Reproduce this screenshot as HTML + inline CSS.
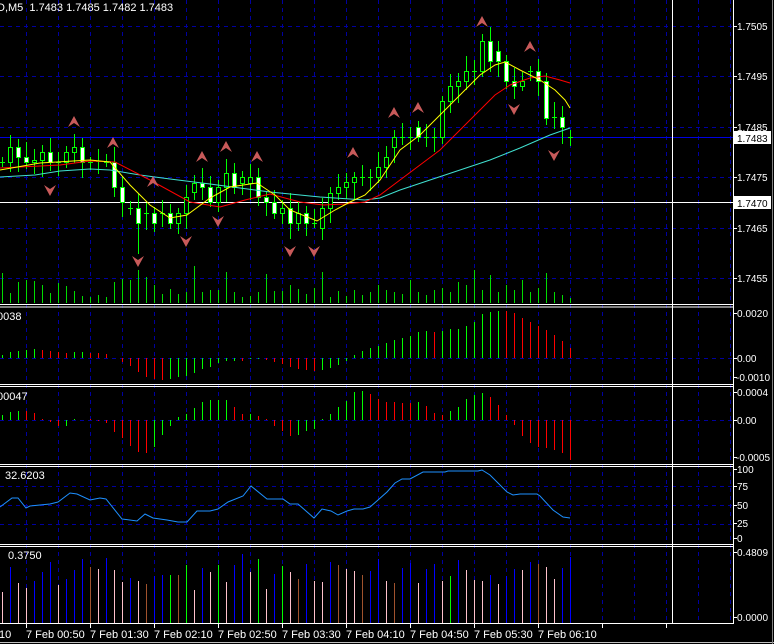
<!DOCTYPE html>
<html><head><meta charset="utf-8">
<style>
html,body{margin:0;padding:0;background:#000;}
body{width:774px;height:644px;overflow:hidden;position:relative;font-family:"Liberation Sans",sans-serif;}
svg{position:absolute;left:0;top:0;}
text{font-family:"Liberation Sans",sans-serif;font-size:11px;fill:#fff;}
text.r{font-size:10px;}
</style></head>
<body>
<svg id="s" width="774" height="644" viewBox="0 0 774 644" xmlns="http://www.w3.org/2000/svg" shape-rendering="crispEdges">
<rect x="0" y="0" width="774" height="644" fill="#000"/>
<g id="grid"></g>
<g id="main"></g>
<g id="ind"></g>
<line x1="672.5" y1="0" x2="672.5" y2="624" stroke="#fff"/>
<line x1="733.5" y1="0" x2="733.5" y2="624" stroke="#fff"/>
<line x1="0" y1="304.5" x2="734" y2="304.5" stroke="#fff"/>
<line x1="0" y1="307" x2="734" y2="307" stroke="#fff"/>
<line x1="0" y1="384.5" x2="734" y2="384.5" stroke="#fff"/>
<line x1="0" y1="386.5" x2="734" y2="386.5" stroke="#fff"/>
<line x1="0" y1="464.5" x2="734" y2="464.5" stroke="#fff"/>
<line x1="0" y1="466.5" x2="734" y2="466.5" stroke="#fff"/>
<line x1="0" y1="544.5" x2="734" y2="544.5" stroke="#fff"/>
<line x1="0" y1="546.5" x2="734" y2="546.5" stroke="#fff"/>
<line x1="0" y1="623.5" x2="734" y2="623.5" stroke="#fff"/>
<line x1="0" y1="642.5" x2="774" y2="642.5" stroke="#c0c0c0"/>
<line x1="772.5" y1="0" x2="772.5" y2="644" stroke="#808080"/>
<g id="ticks"></g>
<text x="-3" y="11">D,M5&#160;&#160;1.7483 1.7485 1.7482 1.7483</text>
<text x="-3" y="320">0038</text>
<text x="-3" y="400">00047</text>
<text x="5" y="479">32.6203</text>
<text x="8" y="559">0.3750</text>
<text class="r" x="737" y="30">1.7505</text>
<text class="r" x="737" y="80">1.7495</text>
<text class="r" x="737" y="131">1.7485</text>
<text class="r" x="737" y="181">1.7475</text>
<text class="r" x="737" y="232">1.7465</text>
<text class="r" x="737" y="282">1.7455</text>
<rect x="734" y="131" width="37" height="13" fill="#fff"/>
<text class="r" x="737" y="142" style="fill:#000">1.7483</text>
<rect x="734" y="196" width="37" height="13" fill="#fff"/>
<text class="r" x="737" y="207" style="fill:#000">1.7470</text>
<text class="r" x="737" y="317" textLength="31">0.0020</text>
<text class="r" x="737" y="362">0.00</text>
<text class="r" x="736" y="381" textLength="34">-0.0010</text>
<text class="r" x="737" y="396" textLength="31">0.0004</text>
<text class="r" x="737" y="424">0.00</text>
<text class="r" x="736" y="461" textLength="34">-0.0005</text>
<text class="r" x="737" y="473">100</text>
<text class="r" x="737" y="490">75</text>
<text class="r" x="737" y="509">50</text>
<text class="r" x="737" y="527">25</text>
<text class="r" x="737" y="542">0</text>
<text class="r" x="737" y="556" textLength="31">0.4809</text>
<text class="r" x="737" y="621" textLength="31">0.0000</text>
<text x="-1" y="638">10</text>
<text x="26" y="638">7 Feb 00:50</text>
<text x="90" y="638">7 Feb 01:30</text>
<text x="154" y="638">7 Feb 02:10</text>
<text x="218" y="638">7 Feb 02:50</text>
<text x="282" y="638">7 Feb 03:30</text>
<text x="346" y="638">7 Feb 04:10</text>
<text x="410" y="638">7 Feb 04:50</text>
<text x="474" y="638">7 Feb 05:30</text>
<text x="538" y="638">7 Feb 06:10</text>
</svg>
<script>
(function(){
var NS="http://www.w3.org/2000/svg";
function el(g,t,a){var e=document.createElementNS(NS,t);for(var k in a)e.setAttribute(k,a[k]);g.appendChild(e);return e;}
var grid=document.getElementById('grid'),main=document.getElementById('main'),ind=document.getElementById('ind'),ticks=document.getElementById('ticks');
var gc="#0000a0";
for(var x=26;x<733;x+=32){el(grid,'line',{x1:x+.5,y1:0,x2:x+.5,y2:623,stroke:gc,'stroke-dasharray':'4,4'});}
[26,76,127,177,228,278,358,420,486,505,524].forEach(function(y){el(grid,'line',{x1:0,y1:y+.5,x2:733,y2:y+.5,stroke:gc,'stroke-dasharray':'4,4'});});
[26,76,127,177,228,278,313,358,377,392,420,457,469,486,505,523,538,552,617].forEach(function(y){el(ticks,'line',{x1:733,y1:y+.5,x2:737,y2:y+.5,stroke:'#fff'});});
for(var t=26;t<700;t+=64){el(ticks,'line',{x1:t+.5,y1:624,x2:t+.5,y2:628,stroke:'#fff'});}
el(main,'line',{x1:0,y1:137.5,x2:733,y2:137.5,stroke:'#0000e0'});
el(main,'line',{x1:0,y1:202.5,x2:733,y2:202.5,stroke:'#fff'});
var vol=[273,293,282,280,281,285,293,283,286,291,296,297,295,297,282,279,280,270,277,285,294,289,294,292,266,292,290,290,272,292,297,296,292,274,291,291,285,289,294,288,272,297,291,296,290,295,292,285,290,292,294,280,292,295,290,288,292,282,285,270,290,275,292,285,290,280,292,288,273,292,295,298];
for(var i=0;i<72;i++){var X=2+8*i+.5;el(main,'line',{x1:X,y1:vol[i],x2:X,y2:303,stroke:'#00dd00'});}
var c=[162,147,157,162,160,152,162,162,152,147,162,162,161,162,187,202,208,223,213,223,213,223,213,197,183,187,202,187,173,187,177,177,197,202,213,208,223,213,223,223,208,193,187,182,177,177,177,167,157,137,137,137,137,137,137,101,86,81,71,71,41,61,61,81,86,81,71,81,118,117,127,137];
var o=[];for(i=0;i<72;i++)o[i]=i?c[i-1]:162;
o[18]=213;o[20]=213;o[22]=223;o[24]=192;o[26]=187;o[30]=183;o[31]=183;o[35]=213;o[37]=223;o[39]=223;o[40]=228;o[49]=147;o[52]=127;o[59]=71;o[61]=41;o[62]=51;o[63]=61;o[66]=71;o[67]=71;o[69]=117;o[70]=117;o[71]=137;
var dj=[0,7,11,12,13,16,18,20,45,46,50,51,53,54,59,66,69,71];
dj.forEach(function(k){o[k]=c[k];});
for(i=0;i<72;i++){
 var X=2+8*i,top=Math.min(o[i],c[i]),bot=Math.max(o[i],c[i]);
 var hi=top-(5+(i*7)%11),lo=bot+(5+(i*5)%13);
 if(i==17)lo=254; if(i==40)lo=240;
 el(main,'line',{x1:X+.5,y1:hi,x2:X+.5,y2:lo,stroke:'#00ff00'});
 if(bot-top<2){el(main,'line',{x1:X-2,y1:top+.5,x2:X+3,y2:top+.5,stroke:'#00ff00'});}
 else el(main,'rect',{x:X-1.5,y:top+.5,width:4,height:bot-top,fill:(c[i]>o[i]?'#fff':'#000'),stroke:'#00ff00'});
}
function pl(g,pts,col,w){el(g,'polyline',{points:pts.map(function(p){return p.join(',');}).join(' '),fill:'none',stroke:col,'stroke-width':w||1,'shape-rendering':'auto'});}
pl(main,[[0,177],[35,175],[60,171],[90,169],[110,170],[140,175],[170,179],[210,184],[240,188],[270,192],[300,195],[320,197],[350,199],[365,200],[380,198],[400,190],[430,180],[460,170],[490,160],[520,148],[550,135],[570,128]],'#40e0d0');
pl(main,[[0,168],[60,165],[90,161],[115,162],[150,180],[190,202],[220,207],[245,200],[270,194],[300,202],[323,205],[345,204],[365,202],[380,195],[400,180],[420,165],[440,150],[460,130],[480,110],[495,95],[510,85],[530,78],[545,76],[560,80],[570,83]],'#ff0000');
pl(main,[[0,170],[40,163],[90,160],[110,162],[130,185],[150,205],[170,218],[187,215],[210,198],[230,187],[257,183],[275,195],[290,210],[317,221],[335,210],[350,202],[365,195],[380,180],[400,150],[420,135],[440,115],[460,95],[480,75],[495,65],[505,62],[520,70],[540,80],[555,90],[565,100],[570,108]],'#ffff00');
function up(x,y){el(main,'path',{d:'M'+x+','+(y-6)+' L'+(x+6)+','+(y+5)+' L'+x+','+(y+1)+' L'+(x-6)+','+(y+5)+'Z',fill:'#c85a5a','shape-rendering':'auto'});}
function dn(x,y){el(main,'path',{d:'M'+x+','+(y+6)+' L'+(x+6)+','+(y-5)+' L'+x+','+(y-1)+' L'+(x-6)+','+(y-5)+'Z',fill:'#c85a5a','shape-rendering':'auto'});}
[[74,122],[113,143],[153,182],[202,157],[226,147],[257,157],[353,153],[394,113],[418,108],[482,22],[530,47]].forEach(function(p){up(p[0],p[1]);});
[[50,190],[138,261],[186,241],[218,221],[290,251],[314,251],[514,109],[554,155]].forEach(function(p){dn(p[0],p[1]);});
var m=[[3,1],[6,1],[7,1],[8,1],[9,1],[8,0],[7,0],[6,0],[5,0],[6,1],[6,1],[5,0],[5,0],[4,0],[0,0],[-4,0],[-8,0],[-14,0],[-19,0],[-21,0],[-22,0],[-21,1],[-19,1],[-18,1],[-15,1],[-11,1],[-9,1],[-5,1],[-3,1],[-3,1],[-3,0],[-1,1],[-1,1],[-2,0],[-4,0],[-6,0],[-9,0],[-11,0],[-12,0],[-13,0],[-12,1],[-10,1],[-7,1],[-3,1],[3,1],[7,1],[10,1],[12,1],[15,1],[18,1],[20,1],[22,1],[26,1],[27,1],[26,0],[27,1],[29,1],[29,1],[32,1],[36,1],[44,1],[46,1],[47,1],[47,0],[45,0],[40,0],[36,0],[32,0],[28,0],[23,0],[17,0],[10,0]];
m.forEach(function(v,i){if(!v[0])return;var X=2+8*i+.5;el(ind,'line',{x1:X,y1:358,x2:X,y2:358-v[0],stroke:v[1]?'#00ff00':'#ff0000'});});
var h=[[5,1],[8,1],[9,1],[9,0],[7,0],[1,0],[-2,0],[-6,0],[-6,1],[1,1],[0,1],[1,0],[-1,0],[-3,0],[-12,0],[-18,0],[-26,0],[-32,0],[-33,0],[-27,1],[-15,1],[-6,1],[3,1],[6,1],[12,1],[18,1],[20,1],[20,1],[20,1],[13,0],[6,0],[6,1],[4,0],[1,0],[-6,0],[-11,0],[-16,0],[-15,1],[-11,1],[-9,1],[1,1],[6,1],[13,1],[19,1],[28,1],[29,1],[26,0],[21,0],[18,0],[18,0],[17,0],[17,0],[18,1],[14,0],[7,0],[5,0],[9,1],[13,1],[21,1],[25,1],[27,1],[23,0],[15,0],[5,0],[-5,0],[-16,0],[-23,0],[-27,0],[-28,0],[-30,0],[-33,0],[-40,0]];
h.forEach(function(v,i){if(!v[0])return;var X=2+8*i+.5;el(ind,'line',{x1:X,y1:420,x2:X,y2:420-v[0],stroke:v[1]?'#00ff00':'#ff0000'});});
pl(ind,[[0,507],[12,498],[18,498],[26,508],[30,506],[50,504],[58,502],[70,493],[77,494],[90,500],[100,498],[106,499],[122,519],[137,521],[145,514],[153,518],[167,520],[178,522],[187,522],[197,511],[210,511],[218,509],[228,502],[243,496],[251,486],[267,499],[283,499],[290,504],[298,504],[314,518],[322,509],[331,511],[338,515],[347,511],[354,509],[363,509],[370,507],[378,500],[387,492],[395,483],[402,479],[410,479],[423,472],[432,472],[445,472],[448,471],[478,471],[482,470],[490,475],[507,492],[513,495],[520,494],[537,494],[540,496],[553,510],[563,517],[570,518]],'#1e90ff');
var b=[[592,'p'],[567,'b'],[583,'p'],[588,'p'],[581,'b'],[572,'b'],[562,'b'],[585,'p'],[579,'b'],[570,'b'],[559,'b'],[567,'r'],[569,'p'],[558,'b'],[570,'p'],[582,'p'],[578,'b'],[581,'p'],[584,'r'],[576,'b'],[575,'b'],[575,'g'],[575,'r'],[565,'g'],[590,'p'],[568,'b'],[572,'p'],[565,'g'],[582,'p'],[565,'b'],[554,'b'],[572,'p'],[559,'g'],[589,'p'],[574,'b'],[566,'g'],[572,'p'],[579,'r'],[564,'b'],[581,'p'],[582,'p'],[562,'b'],[565,'r'],[569,'p'],[571,'p'],[575,'r'],[571,'b'],[559,'b'],[581,'p'],[583,'r'],[568,'b'],[563,'b'],[583,'p'],[569,'b'],[564,'b'],[581,'p'],[576,'g'],[560,'b'],[570,'p'],[580,'p'],[581,'p'],[575,'b'],[584,'p'],[576,'b'],[569,'b'],[570,'p'],[562,'b'],[564,'r'],[567,'p'],[579,'p'],[568,'b'],[557,'b']];
var cm={p:'#ffc0cb',b:'#0000ff',g:'#00ff00',r:'#a0522d'};
b.forEach(function(v,i){var X=2+8*i+.5;el(ind,'line',{x1:X,y1:v[0],x2:X,y2:623,stroke:cm[v[1]]});});
})();
</script>
</body></html>
